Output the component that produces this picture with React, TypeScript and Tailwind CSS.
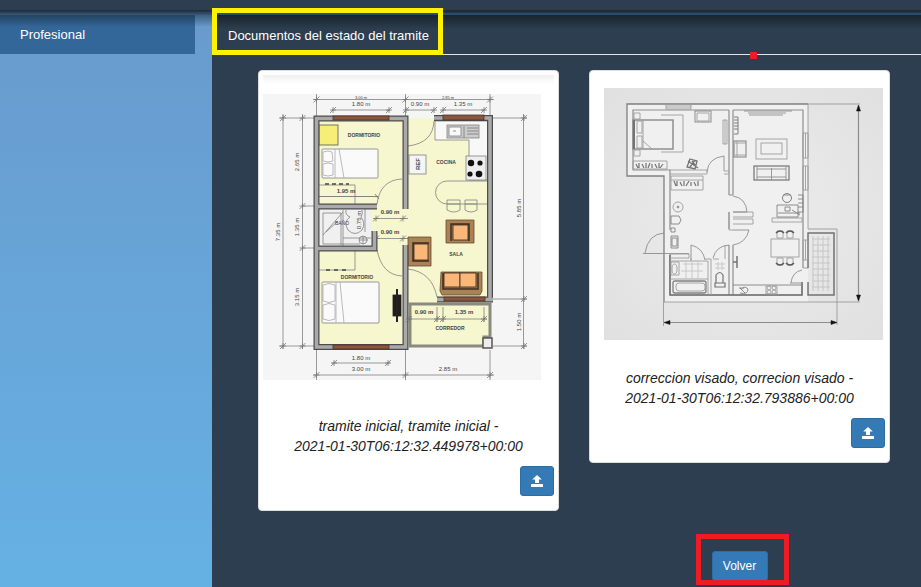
import type { ReactNode } from "react";

type LabelProps = { x: number; y: number; children: string; vertical?: boolean; bold?: boolean; size?: number };

function Label({ x, y, children, vertical, bold, size }: LabelProps) {
  return (
    <text
      x={x}
      y={y}
      textAnchor="middle"
      dominantBaseline="central"
      fontSize={size ?? 6}
      fontWeight={bold ? 700 : 400}
      fill="#444"
      stroke="none"
      transform={vertical ? `rotate(-90 ${x} ${y})` : undefined}
    >
      {children}
    </text>
  );
}

function Tick({ x, y }: { x: number; y: number }) {
  return <path d={`M${x - 3} ${y + 3}l6-6M${x - 3} ${y}h6M${x} ${y - 3}v6`} stroke="#777" strokeWidth="0.8" />;
}

function ColorPlan() {
  return (
    <svg viewBox="263 94 278 286" className="block w-[278px] max-w-full" role="img" aria-label="Plano inicial" fill="none" stroke="#808080" strokeWidth="0.8" fontFamily="Liberation Sans, Arial, sans-serif">
      <rect x="263" y="94" width="278" height="286" fill="#f5f5f5" stroke="none" />
      <path d="M316 118H490V346H316Z" fill="#f7f7cf" stroke="none" />
      {/* dimension lines */}
      <path d="M313 99.500H494M332 110H390M405 110H434M443 110H484M283 114V349M302.500 114V349M523.500 114V349M279 118H314M302 206H314M302 248H314M279 346H314M493 118H527M493 299H527M493 346H527M332 363H390M313 375H494M316.500 94V116M405.500 94V116M490 94V116M316.500 350V380M405.500 350V380M490 350V380" />
      {[[316.5, 99.5], [405.5, 99.5], [490, 99.5], [333, 110], [389, 110], [406, 110], [434, 110], [443, 110], [484, 110], [283, 118], [302.5, 118], [302.5, 206], [302.5, 248], [283, 346], [302.5, 346], [524, 118], [524, 299], [524, 346], [334, 363], [388, 363], [316.5, 375], [405.5, 375], [490, 375]].map(([x, y]) => (
        <Tick key={`${x}-${y}`} x={x} y={y} />
      ))}
      <Label x={361} y={97} size={4}>3.00 m</Label>
      <Label x={448} y={97} size={4}>2.85 m</Label>
      <Label x={361} y={104}>1.80 m</Label>
      <Label x={420} y={104}>0.90 m</Label>
      <Label x={463} y={104}>1.35 m</Label>
      <Label x={297} y={162} vertical>2.65 m</Label>
      <Label x={297} y={227} vertical>1.35 m</Label>
      <Label x={278} y={232} vertical>7.35 m</Label>
      <Label x={297} y={297} vertical>3.15 m</Label>
      <Label x={519} y={208} vertical>5.85 m</Label>
      <Label x={519} y={322} vertical>1.50 m</Label>
      <Label x={361} y={358}>1.80 m</Label>
      <Label x={361} y={369}>3.00 m</Label>
      <Label x={448} y={369}>2.85 m</Label>
      {/* upper bedroom */}
      <rect x="319" y="125" width="19" height="20" fill="#f7ee78" stroke="#555" />
      <rect x="322" y="149" width="56" height="29" rx="1" fill="#fafafa" />
      <path d="M335 149V178M339 149L344 178M323 152q5-2 9 0l1 9q-5 2-10 0zM323 164q5-2 10 0v11q-5 2-10 0z" stroke="#aaa" />
      <path d="M319 185H355V204" />
      <path d="M325 184h24" stroke="#444" strokeWidth="1.500" strokeDasharray="4 3" />
      <path d="M316 196.500H378M375 194l4 5" stroke="#666" />
      <path d="M377 204Q380 180 402 179" />
      <Label x={364} y={135} size={5} bold>DORMITORIO</Label>
      <Label x={346} y={191} bold>1.95 m</Label>
      {/* bathroom */}
      <rect x="319" y="209" width="53" height="37" fill="#f0f0f0" stroke="none" />
      <path d="M323 213H341V245M323 213V244H360M323 235L343 212M326 232l12-11" />
      <path d="M343 210V246M343 238H371M346 210q-1 5 4 7-7 5-2 13 7 7 14 0 4-7-1-13 2-3 1-7" />
      <circle cx="363" cy="240" r="4" />
      <path d="M363 236v8M359 240h9M365 209V232" />
      <Label x={342} y={223} size={5}>BAÑO</Label>
      <Label x={359} y={220} vertical>0.75 m</Label>
      {/* lower bedroom */}
      <path d="M319 270H355V251" />
      <path d="M326 270h22" stroke="#444" strokeWidth="1.500" strokeDasharray="4 4" />
      <rect x="322" y="282" width="57" height="41" rx="1" fill="#fafafa" />
      <path d="M336 282V323M340 282L344 323M323 285q6-3 12 0v16q-6 3-12 0zM323 305q6-3 12 0v14q-6 3-12 0z" stroke="#aaa" />
      <path d="M377 250Q382 275 402 276" />
      <rect x="393" y="295" width="8" height="21" fill="#241c1c" stroke="#222" />
      <path d="M397 289V322" stroke="#222" strokeWidth="2" />
      <Label x={357} y={277} size={5} bold>DORMITORIO</Label>
      <path d="M374 218.500H408M374 238.500H408" />
      <Tick x={376} y={218.500} />
      <Tick x={403} y={218.500} />
      <Tick x={376} y={238.500} />
      <Tick x={403} y={238.500} />
      <Label x={390} y={212} bold>0.90 m</Label>
      <Label x={390} y={232} bold>0.90 m</Label>
      {/* kitchen */}
      <path d="M435 121H488V180H469V140H435Z" fill="#f8f8f8" />
      <rect x="447" y="125" width="32" height="13" fill="#ccc" />
      <rect x="449" y="127" width="12" height="9" fill="#f8f8f8" />
      <path d="M453 131h3M467 128h11M467 131h11M467 134h11M464 126v12" stroke="#777" />
      <rect x="466" y="156" width="20" height="24" fill="#eee" />
      <g fill="#111" stroke="none">
        <circle cx="471" cy="163" r="3.200" />
        <circle cx="480" cy="163" r="2.600" />
        <circle cx="470" cy="174" r="2.600" />
        <circle cx="479" cy="174" r="3.300" />
      </g>
      <rect x="409" y="155" width="17" height="19" fill="#f5f5f5" />
      <Label x={418} y={164} vertical bold>REF</Label>
      <path d="M487 181H447a11.500 11.500 0 0 0 0 23H487" fill="#f7f7cf" />
      <path d="M447 200h13v10q-6 4-13 0zM465 200h12v10q-6 4-12 0zM447 204h13M465 204h12" />
      <path d="M434 121Q433 143 408 146M408 269Q432 272 437 297" />
      <Label x={446} y={162} size={5} bold>COCINA</Label>
      <Label x={456} y={254} size={5} bold>SALA</Label>
      {/* armchairs and sofa */}
      <g fill="#a98256" stroke="#6a4a2c">
        <path d="M446 220H474V243H446ZM408 237H431V266H408ZM441 272H482V291L480 295H442L440 291Z" />
        <g fill="#f9b77a" stroke="#332318">
          <rect x="453" y="225" width="15" height="15" />
          <rect x="414" y="244" width="14" height="16" />
          <rect x="444" y="273" width="16" height="14" />
          <rect x="460" y="273" width="16" height="14" />
        </g>
        <path d="M451 241V224H469V241M429 243H413V261H429M443 273V289H478V273" fill="none" stroke="#3e2c20" strokeWidth="1.500" />
      </g>
      {/* walls */}
      <g stroke="#4d4d4d" strokeWidth="6">
        <path d="M377 206.500H316.500V118.500H405.500V209M316.500 206V347H405.500V245M316.500 248.500H374.500V231M434 118H490V301M437 299.500H493" />
        <path d="M377 206.500H316.500V118.500H405.500V209M316.500 206V347H405.500V245M316.500 248.500H374.500V231M434 118H490V301M437 299.500H493" stroke="#aaa" strokeWidth="3.500" />
      </g>
      <g fill="#8b563c" stroke="#4a342b">
        <rect x="333" y="116" width="56" height="4" />
        <rect x="443" y="115" width="41" height="5" />
        <rect x="333" y="345" width="56" height="4" />
        <rect x="444" y="297" width="41" height="4" />
      </g>
      {/* corridor */}
      <path d="M408 304H490V339M410 304V346H484V337H490" stroke="#8a8a80" strokeWidth="3" />
      <rect x="483" y="338" width="9" height="10" fill="#eee" stroke="#555" strokeWidth="1.500" />
      <path d="M408 319H487M437 307V322M443 307V322M484 307V322" />
      <Tick x={409} y={319} />
      <Tick x={437} y={319} />
      <Tick x={443} y={319} />
      <Tick x={484} y={319} />
      <Label x={424} y={312} bold>0.90 m</Label>
      <Label x={464} y={312} bold>1.35 m</Label>
      <Label x={450} y={328} size={5} bold>CORREDOR</Label>
    </svg>
  );
}

function LinePlan() {
  return (
    <svg viewBox="604 88 279 252" className="block w-[279px] max-w-full" role="img" aria-label="Plano corregido" fill="none" stroke="#888" strokeWidth="0.900">
      <defs>
        <radialGradient id="paper" cx="0.500" cy="0.500" r="0.700">
          <stop offset="0" stopColor="#ededed" />
          <stop offset="1" stopColor="#e0e0e0" />
        </radialGradient>
      </defs>
      <rect x="604" y="88" width="279" height="252" fill="url(#paper)" stroke="none" />
      <path d="M627 104H808V302H664V176H627Z" fill="#f0f0f0" stroke="none" />
      <g opacity="0.8">
        {/* outer walls */}
        <path d="M808 104H627V176H664V302" stroke="#666" strokeWidth="1.300" />
        <path d="M808 104H860M664 302H860M808 104V229M808 229H837V325M663.500 302V326" />
        <path d="M729 110H633V170H670V230M729 110V195M733 110V195M729 195h4M733 110H803V268M670 254V295H802V282M729 212V229M729 245V295M733 245V295" stroke="#777" strokeWidth="1.200" />
        <path d="M670 170H707V174H670M724 171H729M724 174H729M733 212H753V217H733M733 219H753V224H733M729 212V230H733M772 218H802V222H772ZM803 268H808" />
        <path d="M670 255V295H802V282M808 282V295H834V233H808V268" stroke="#555" strokeWidth="1.500" />
        <path d="M803 133H808V158H803ZM805.500 133V158M803 166H808V190H803ZM805.500 166V190M803 240H808V260H803ZM805.500 240V260M666 105h25v4h-25zM666 107h25M723 120h4v24h-4zM725 120v24" />
        {/* bedroom */}
        <rect x="633" y="120" width="40" height="29" stroke="#777" strokeWidth="1.500" />
        <path d="M643 120V149M637 121h5v12h-5zM637 136h5v12h-5zM643 141l9 8M661 115H683V152H661M634 113h6v6h-6zM634 150h6v6h-6z" />
        <path d="M634 120V149" stroke="#555" strokeWidth="2" />
        <rect x="695" y="111" width="16" height="11" stroke="#666" />
        <path d="M697 113h12v8h-12zM633 161H667V169H633ZM671 176H703V190H671ZM671 180H703" />
        <path d="M636 164l2 4m1-5v5m3-4l2 4m2-5v5m4-5l-2 5m4-4v4m3-4l2 4m2-5v5m4-4l-3 4M674 181l2 5m1-5v5m3-4l2 4m2-5v5m5-5l-3 5m5-4v4m3-4l2 4m2-5v5" stroke="#555" strokeWidth="1.200" />
        <path d="M690 159l7 2-2 8-8-2zM692 161l3 4m-5 2l5-7M688 161l10 7" stroke="#555" strokeWidth="1.300" />
        {/* doors */}
        <path d="M707 172Q708 158 724 156V171M733 196Q746 198 747 212H733M733 245Q746 243 749 230H733M645 253Q648 234 664 233M643 253.500H689M691 260V245Q703 248 705 260M713 258Q716 246 729 245M791 283Q792 272 802 270M790 283H803" stroke="#777" />
        {/* bathroom */}
        <circle cx="678" cy="207" r="5" />
        <circle cx="678" cy="207" r="1" fill="#555" />
        <path d="M671 216h8l2 4-2 4h-8zM671 228h4v4h-4zM671 236h7v12h-7zM672 238h5v8h-5z" stroke="#666" />
        <path d="M670 254H689V258H670M670 261H708V295M711 259V295M691 258V261M705 259h6M713 259h6M725 245v14M670 279H708" />
        <path d="M671 262h8v13h-8z" />
        <ellipse cx="674.500" cy="269" rx="2.500" ry="5" />
        <rect x="673" y="281" width="33" height="12" rx="2" stroke="#666" strokeWidth="1.300" />
        <rect x="676" y="283" width="29" height="8" rx="3" />
        <path d="M683 264H703M681 271H703M686 262V278M692 262V278M698 262V278M715 264h10M715 268h10M718 262v8M722 262v8" stroke="#bbb" />
        <path d="M716 275q4-5 7 0v8h-7zM715 283h10v4h-10z" stroke="#555" strokeWidth="1.200" />
        {/* living room */}
        <path d="M744 111h48M748 113h38M749 115h34" stroke="#777" />
        <path d="M734 117h4v17h-4M734 120h4M734 123h4M734 126h4M734 129h4" stroke="#555" />
        <rect x="734" y="141" width="12" height="16" stroke="#555" />
        <path d="M737 141v16M735 143h11M735 155h11" />
        <rect x="756" y="139" width="31" height="20" />
        <rect x="761" y="143" width="21" height="11" />
        <rect x="754" y="166" width="35" height="14" stroke="#555" strokeWidth="1.200" />
        <path d="M757 166V180M786 166V180M771.500 168V180M757 169H786M757 177H786" stroke="#777" />
        <circle cx="787" cy="198" r="4.500" stroke="#555" />
        <path d="M783 195h8M777 205H798V217H777ZM785 207h5v4h-5zM792 210l8 5M798 195h5v17h-5M798 199h5M798 203h5M798 207h5M778 213h22" stroke="#666" />
        {/* dining and kitchen */}
        <rect x="771" y="239" width="28" height="18" />
        <path d="M777 231h6v7h-6zM787 231h6v7h-6zM777 258h6v7h-6zM787 258h6v7h-6z" />
        <path d="M776 233q4-4 8 0M786 233q4-4 8 0M776 263q4 4 8 0M786 263q4 4 8 0" stroke="#333" strokeWidth="1.500" />
        <path d="M737 256v12M733 262h4" stroke="#555" strokeWidth="1.500" />
        <path d="M733 285H802M740 288l5 5M739 288h5M740 293q8 2 8-4-4-4-7 1" stroke="#666" />
        <path d="M766 286h11v8h-11z" />
        <circle cx="769" cy="288" r="2" />
        <circle cx="774" cy="288" r="2" />
        <circle cx="769" cy="292" r="2" />
        <circle cx="774" cy="292" r="2" />
        {/* balcony tiles */}
        <path d="M813 236V291M818 236V291M823 236V291M828 236V291M812 239h18M812 245h18M812 251h18M812 257h18M812 263h18M812 269h18M812 275h18M812 281h18M812 287h18" stroke="#bbb" />
        {/* overall dimensions */}
        <path d="M858.500 106V300M666 322.500H835" stroke="#777" strokeWidth="1.200" />
      </g>
      <path d="M858.500 105l2 6h-4zM858.500 301l2-6h-4zM664 322.500l6-2v4zM837 322.500l-6-2v4z" fill="#111" stroke="#111" strokeWidth="0.500" />
    </svg>
  );
}

function UploadIcon() {
  return (
    <svg viewBox="0 0 12 12" className="h-3 w-3" fill="currentColor" aria-hidden="true">
      <path d="M6 0L10.800 4.600H8V8H4V4.600H1.200ZM0.500 9H11.500L12 9.500V12H0V9.500Z" />
    </svg>
  );
}

function DocumentCard({ className, caption, children }: { className: string; caption: string[]; children: ReactNode }) {
  return (
    <article className={`rounded-sm border border-[#ddd] bg-white px-1 pb-3.5 ${className}`}>
      {children}
      <p className="text-center text-sm leading-5 text-[#222] italic">
        {caption[0]}
        <br />
        {caption[1]}
      </p>
      <div className="mt-2.5 flex justify-end">
        <button type="button" aria-label="Subir documento" className="flex h-[30px] w-[34px] items-center justify-center rounded-[3px] border border-[#2e6da4] bg-[#337ab7] text-white">
          <UploadIcon />
        </button>
      </div>
    </article>
  );
}

export default function App() {
  return (
    <div className="flex min-h-screen flex-col bg-[#2d3e50] font-['Liberation_Sans',Arial,sans-serif] text-[13px]">
      <header className="h-2.5 bg-[#2d3e50]" />
      <div className="flex flex-1">
        <aside className="w-[212px] shrink-0 bg-linear-to-b from-[#699acd] to-[#65b1e4]">
          <div className="h-[5px] bg-linear-to-b from-[#1d2a35] to-[#385b7c]" />
          <div className="bg-linear-to-b from-[#3d6080] to-transparent to-[12px]">
            <nav className="mr-[17px] bg-linear-to-b from-[#23445f] to-[#336699] to-[12px]">
              <a href="#profesional" className="block px-5 py-[9px] leading-[21px] text-white">
                Profesional
              </a>
            </nav>
          </div>
        </aside>
        <main className="min-w-0 flex-1">
          <div className="h-[5px] border-b-2 border-[#2c4d69] bg-linear-to-b from-[#1b2733] to-[#263747]" />
          <div className="relative border-b border-[#e5e5e5] bg-linear-to-b from-[#1a242e] to-[#2d3e50] to-[14px]">
            <h1 className="px-4 pt-2.5 pb-2 leading-[21px] text-white">Documentos del estado del tramite</h1>
            <span className="absolute -top-[7px] left-0 h-[47px] w-[231px] border-5 border-[#fff200]" />
            <span className="absolute top-[37px] right-[164px] size-[7px] bg-[#ed1c24]" />
          </div>
          <div className="grid grid-cols-2 items-start gap-x-[30px] pt-[15px] pr-[31px] pb-1.5 pl-[46px]">
            <DocumentCard className="pt-1" caption={["tramite inicial, tramite inicial -", "2021-01-30T06:12:32.449978+00:00"]}>
              <div className="h-[19px] bg-linear-to-b from-[#f0f0f0] to-white to-[9px]" />
              <div className="mb-9">
                <ColorPlan />
              </div>
            </DocumentCard>
            <DocumentCard className="pt-[17px]" caption={["correccion visado, correcion visado -", "2021-01-30T06:12:32.793886+00:00"]}>
              <div className="mb-7 pl-2.5">
                <LinePlan />
              </div>
            </DocumentCard>
            <div className="col-start-2 flex justify-center pt-10">
              <div className="relative">
                <button type="button" className="h-[30px] w-14 rounded-[3px] border border-[#2e6da4] bg-[#337ab7] text-xs text-white">
                  Volver
                </button>
                <span className="pointer-events-none absolute -top-[17px] -left-4 h-[51px] w-[93px] border-5 border-[#ed1c24]" />
              </div>
            </div>
          </div>
        </main>
      </div>
    </div>
  );
}
